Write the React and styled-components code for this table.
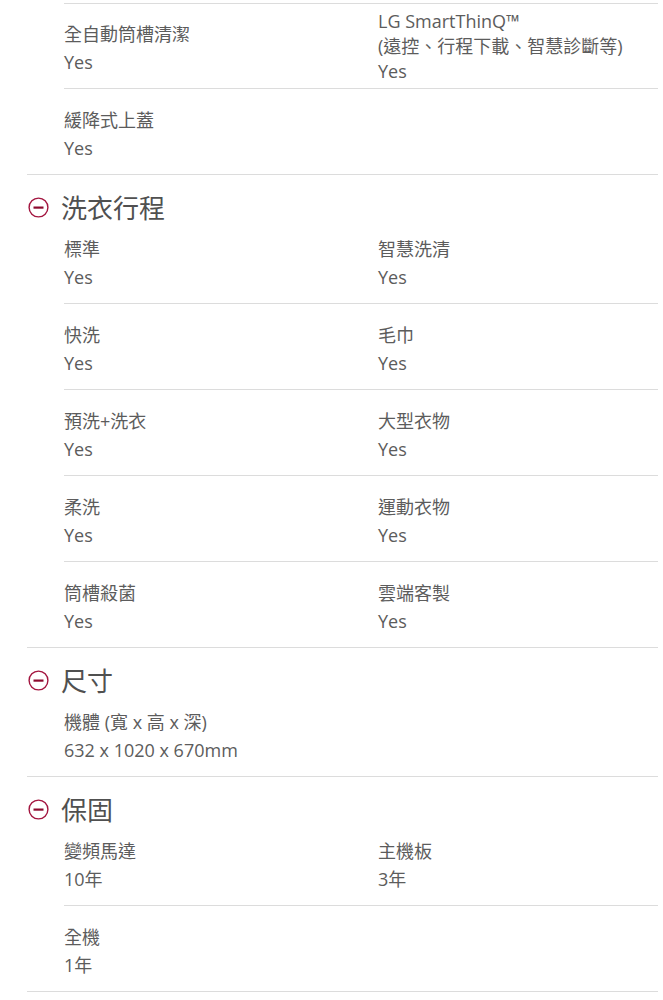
import React from 'react';
import styled, { createGlobalStyle } from 'styled-components';

const GlobalStyle = createGlobalStyle`
  body {
    margin: 0;
    background: #fff;
    font-family: "Open Sans", "Noto Sans CJK TC", sans-serif;
    color: #5c5c5c;
  }
`;

const Page = styled.div`
  width: 631px;
  padding: 3px 0 0 27px;
`;

const Section = styled.section`
  border-bottom: 1px solid #dcdcdc;
`;

const SectionHeader = styled.div`
  display: flex;
  align-items: center;
  gap: 12px;
  height: 43px;
  box-sizing: border-box;
  padding: 21px 0 0 1px;
`;

const SectionTitle = styled.h3`
  margin: 0;
  font-size: 26px;
  line-height: 22px;
  font-weight: 400;
  color: #505050;
  font-family: "Noto Sans CJK TC", sans-serif;
`;

const Rows = styled.div`
  margin-left: 37px;
`;

const Row = styled.div`
  display: grid;
  grid-template-columns: 314px 1fr;
  align-items: center;
  height: 86px;
  box-sizing: border-box;
  padding-top: 5px;
  border-top: ${p => (p.$lead ? '1px solid #dcdcdc' : 'none')};
  border-bottom: 1px solid #dcdcdc;

  &:last-child {
    border-bottom: none;
    height: 85px;
  }
`;

const Spec = styled.div`
  font-size: 18px;
  line-height: 25px;
  color: #5c5c5c;
  margin-top: ${p => (p.$multi ? '-4px' : '0')};
`;

const SpecName = styled.div`
  font-family: "Open Sans", "Noto Sans CJK TC", sans-serif;
  margin-bottom: ${p => (p.$long ? '0' : '3px')};
`;

const SpecValue = styled.div`
  font-family: "Open Sans", "Noto Sans CJK TC", sans-serif;
`;

const MinusIcon = () => (
  <svg width="21" height="21" viewBox="0 0 21 21">
    <circle cx="10.5" cy="10.5" r="9.4" fill="none" stroke="#a3153f" strokeWidth="1.4" />
    <rect x="5.5" y="9.5" width="10" height="2.2" fill="#8c0a2e" />
  </svg>
);

const sections = [
  {
    title: null,
    rows: [
      [
        { name: '全自動筒槽清潔', value: 'Yes' },
        { name: ['LG SmartThinQ™', '(遠控、行程下載、智慧診斷等)'], value: 'Yes' },
      ],
      [{ name: '緩降式上蓋', value: 'Yes' }],
    ],
  },
  {
    title: '洗衣行程',
    rows: [
      [{ name: '標準', value: 'Yes' }, { name: '智慧洗清', value: 'Yes' }],
      [{ name: '快洗', value: 'Yes' }, { name: '毛巾', value: 'Yes' }],
      [{ name: '預洗+洗衣', value: 'Yes' }, { name: '大型衣物', value: 'Yes' }],
      [{ name: '柔洗', value: 'Yes' }, { name: '運動衣物', value: 'Yes' }],
      [{ name: '筒槽殺菌', value: 'Yes' }, { name: '雲端客製', value: 'Yes' }],
    ],
  },
  {
    title: '尺寸',
    rows: [[{ name: '機體 (寬 x 高 x 深)', value: '632 x 1020 x 670mm' }]],
  },
  {
    title: '保固',
    rows: [
      [{ name: '變頻馬達', value: '10年' }, { name: '主機板', value: '3年' }],
      [{ name: '全機', value: '1年' }],
    ],
  },
];

const App = () => (
  <Page>
    <GlobalStyle />
    {sections.map((section, si) => (
      <Section key={si}>
        {section.title && (
          <SectionHeader>
            <MinusIcon />
            <SectionTitle>{section.title}</SectionTitle>
          </SectionHeader>
        )}
        <Rows>
          {section.rows.map((row, ri) => (
            <Row key={ri} $lead={si === 0 && ri === 0}>
              {row.map((spec, ci) => (
                <Spec key={ci} $multi={Array.isArray(spec.name)}>
                  {Array.isArray(spec.name) ? (
                    spec.name.map((line, li) => (
                      <SpecName key={li} $long>{line}</SpecName>
                    ))
                  ) : (
                    <SpecName>{spec.name}</SpecName>
                  )}
                  <SpecValue>{spec.value}</SpecValue>
                </Spec>
              ))}
            </Row>
          ))}
        </Rows>
      </Section>
    ))}
  </Page>
);

export default App;
